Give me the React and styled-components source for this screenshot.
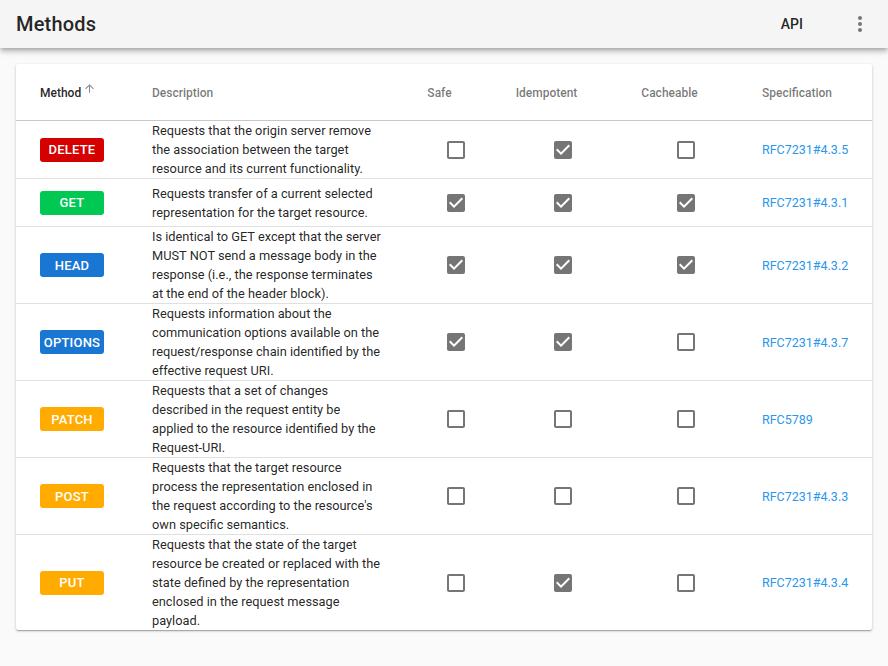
import styled, { createGlobalStyle } from "styled-components";

const GlobalStyle = createGlobalStyle`
  body {
    margin: 0;
    background: #fafafa;
    font-family: Roboto, "Noto Sans", sans-serif;
    color: rgba(0, 0, 0, 0.87);
  }
`;

const AppBar = styled.header`
  height: 48px;
  display: flex;
  align-items: center;
  padding: 0 4px 0 16px;
  background: #f5f5f5;
  box-shadow: 0 2px 4px -1px rgba(0, 0, 0, 0.2), 0 4px 5px 0 rgba(0, 0, 0, 0.14),
    0 1px 10px 0 rgba(0, 0, 0, 0.12);
  position: relative;
  z-index: 1;
`;
const Title = styled.h1`
  flex: 1;
  margin: 0;
  font-size: 20px;
  font-weight: 500;
  letter-spacing: 0.2px;
`;
const NavButton = styled.button`
  border: 0;
  background: none;
  font-family: inherit;
  font-size: 14px;
  font-weight: 500;
  color: rgba(0, 0, 0, 0.87);
  padding: 8px 16px;
  margin-right: 17px;
`;
const IconButton = styled.button`
  width: 48px;
  height: 48px;
  border: 0;
  background: none;
  display: flex;
  align-items: center;
  justify-content: center;
  color: #757575;
  padding: 0;
`;

const Main = styled.main`
  padding: 16px;
`;
const Card = styled.div`
  background: #fff;
  border-radius: 2px;
  box-shadow: 0 1px 3px rgba(0, 0, 0, 0.2), 0 1px 1px rgba(0, 0, 0, 0.14),
    0 2px 1px -1px rgba(0, 0, 0, 0.12);
  overflow: hidden;
`;
const Table = styled.table`
  width: 100%;
  border-collapse: collapse;
  table-layout: fixed;
`;
const HeadCell = styled.th`
  height: 54px;
  padding: 2px ${(p) => (p.$center ? "33px" : "8px")} 0 ${(p) => p.$pl || 0}px;
  text-align: ${(p) => (p.$center ? "center" : "left")};
  font-size: 12px;
  line-height: 16px;
  font-weight: 500;
  color: ${(p) => (p.$active ? "rgba(0,0,0,0.87)" : "rgba(0,0,0,0.54)")};
  border-bottom: 1px solid #c8c8c8;
  white-space: nowrap;
`;
const SortIcon = styled.svg`
  width: 13px;
  height: 13px;
  vertical-align: top;
  margin: -3px 0 0 2px;
  fill: #8a8a8a;
`;
const Row = styled.tr`
  height: 48px;
  & + & td {
    border-top: 1px solid #e0e0e0;
  }
`;
const Cell = styled.td`
  padding: 0 ${(p) => (p.$center ? 0 : 16)}px 0 ${(p) => p.$pl || 0}px;
  text-align: ${(p) => (p.$center ? "center" : "left")};
  font-size: 12.8px;
  line-height: 19px;
  vertical-align: middle;
`;
const Badge = styled.span`
  display: inline-flex;
  align-items: center;
  justify-content: center;
  width: 64px;
  height: 24px;
  border-radius: 3px;
  background: ${(p) => p.$color};
  color: #fff;
  font-size: 13px;
  font-weight: 500;
  letter-spacing: 0.2px;
  vertical-align: middle;
`;
const Box = styled.svg`
  width: 24px;
  height: 24px;
  display: inline-block;
  vertical-align: middle;
  fill: #757575;
`;
const SpecLink = styled.a`
  color: #2a96ee;
  font-size: 12.5px;
  text-decoration: none;
`;

const colors = {
  DELETE: "#d50000",
  GET: "#00c853",
  HEAD: "#1976d2",
  OPTIONS: "#1976d2",
  PATCH: "#ffab00",
  POST: "#ffab00",
  PUT: "#ffab00",
};

const methods = [
  { name: "DELETE", desc: "Requests that the origin server remove the association between the target resource and its current functionality.", safe: false, idem: true, cache: false, spec: "RFC7231#4.3.5" },
  { name: "GET", desc: "Requests transfer of a current selected representation for the target resource.", safe: true, idem: true, cache: true, spec: "RFC7231#4.3.1" },
  { name: "HEAD", desc: "Is identical to GET except that the server MUST NOT send a message body in the response (i.e., the response terminates at the end of the header block).", safe: true, idem: true, cache: true, spec: "RFC7231#4.3.2" },
  { name: "OPTIONS", desc: "Requests information about the communication options available on the request/response chain identified by the effective request URI.", safe: true, idem: true, cache: false, spec: "RFC7231#4.3.7" },
  { name: "PATCH", desc: "Requests that a set of changes described in the request entity be applied to the resource identified by the Request-URI.", safe: false, idem: false, cache: false, spec: "RFC5789" },
  { name: "POST", desc: "Requests that the target resource process the representation enclosed in the request according to the resource's own specific semantics.", safe: false, idem: false, cache: false, spec: "RFC7231#4.3.3" },
  { name: "PUT", desc: "Requests that the state of the target resource be created or replaced with the state defined by the representation enclosed in the request message payload.", safe: false, idem: true, cache: false, spec: "RFC7231#4.3.4" },
];

function Check({ checked }) {
  return (
    <Box viewBox="0 0 24 24">
      {checked ? (
        <path d="M19 3H5c-1.11 0-2 .9-2 2v14c0 1.1.89 2 2 2h14c1.11 0 2-.9 2-2V5c0-1.1-.89-2-2-2zm-9 14l-5-5 1.41-1.41L10 14.17l7.59-7.59L19 8l-9 9z" />
      ) : (
        <path d="M19 5v14H5V5h14m0-2H5c-1.1 0-2 .9-2 2v14c0 1.1.9 2 2 2h14c1.1 0 2-.9 2-2V5c0-1.1-.9-2-2-2z" />
      )}
    </Box>
  );
}

export default function App() {
  return (
    <>
      <GlobalStyle />
      <AppBar>
        <Title>Methods</Title>
        <NavButton>API</NavButton>
        <IconButton aria-label="more">
          <svg width="24" height="24" viewBox="0 0 24 24" fill="currentColor">
            <path d="M12 8c1.1 0 2-.9 2-2s-.9-2-2-2-2 .9-2 2 .9 2 2 2zm0 2c-1.1 0-2 .9-2 2s.9 2 2 2 2-.9 2-2-.9-2-2-2zm0 6c-1.1 0-2 .9-2 2s.9 2 2 2 2-.9 2-2-.9-2-2-2z" />
          </svg>
        </IconButton>
      </AppBar>
      <Main>
        <Card>
          <Table>
            <colgroup>
              <col style={{ width: 112 }} />
              <col style={{ width: 272 }} />
              <col style={{ width: 112 }} />
              <col style={{ width: 102 }} />
              <col style={{ width: 144 }} />
              <col />
            </colgroup>
            <thead>
              <tr>
                <HeadCell $pl={24} $active>
                  Method
                  <SortIcon viewBox="0 0 24 24">
                    <path d="M4 12l1.41 1.41L11 7.83V20h2V7.83l5.58 5.59L20 12l-8-8-8 8z" />
                  </SortIcon>
                </HeadCell>
                <HeadCell $pl={24}>Description</HeadCell>
                <HeadCell $center>Safe</HeadCell>
                <HeadCell $center>Idempotent</HeadCell>
                <HeadCell $center>Cacheable</HeadCell>
                <HeadCell $pl={4}>Specification</HeadCell>
              </tr>
            </thead>
            <tbody>
              {methods.map((m) => (
                <Row key={m.name}>
                  <Cell $pl={24}>
                    <Badge $color={colors[m.name]}>{m.name}</Badge>
                  </Cell>
                  <Cell $pl={24}>{m.desc}</Cell>
                  <Cell $center>
                    <Check checked={m.safe} />
                  </Cell>
                  <Cell $center>
                    <Check checked={m.idem} />
                  </Cell>
                  <Cell $center>
                    <Check checked={m.cache} />
                  </Cell>
                  <Cell $pl={4}>
                    <SpecLink href="#">{m.spec}</SpecLink>
                  </Cell>
                </Row>
              ))}
            </tbody>
          </Table>
        </Card>
      </Main>
    </>
  );
}
